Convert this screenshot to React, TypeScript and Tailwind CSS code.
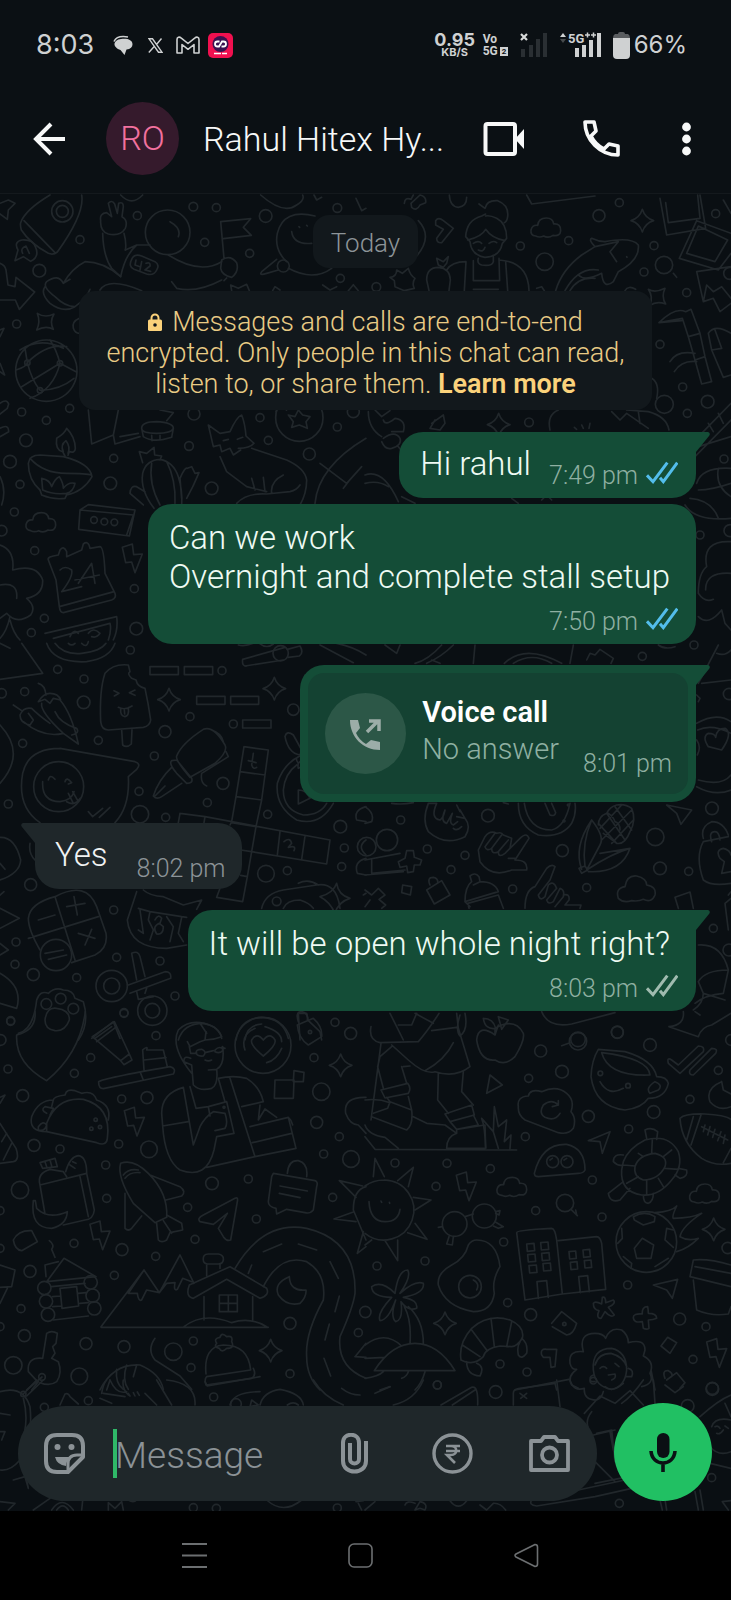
import type { ReactNode } from "react";

type Patch = {
  x: number;
  y: number;
  dots: number[][];
  sparkles?: number[][];
  bolts?: number[][];
  clouds?: number[][];
  paths: string[];
};

const SPARKLE = "M0-34Q8-8 34 0Q8 8 0 34Q-8 8-34 0Q-8-8 0-34Z";
const BOLT = "M-30-34L0-44L4-12L30-14L8 42L-2 10L-20 12Z";
const CLOUD = "M-30 26Q-46 24-44 8Q-40-8-24-6Q-22-28 2-28Q22-28 24-10Q46-12 45 10Q44 28 22 24Q8 34-6 26Q-18 32-30 26Z";

// Doodles are drawn on a grid three times as fine as the page.
const PATCHES: Patch[] = [
  {
    x: 0,
    y: 190,
    dots: [
      [580, 50, 13], [649, 53, 12], [412, 77, 12], [797, 78, 19], [614, 157, 12], [749, 190, 12], [240, 149, 12],
      [118, 242, 19], [50, 402, 12], [65, 666, 12], [209, 655, 12], [139, 691, 12], [78, 751, 19], [30, 815, 19],
      [341, 805, 12], [331, 880, 19], [60, 883, 12], [582, 672, 18], [780, 683, 12], [805, 751, 12], [567, 768, 13],
      [635, 895, 19], [928, 792, 18], [1012, 711, 12], [1060, 665, 18], [43, 966, 12], [104, 1082, 12], [403, 1196, 12],
      [133, 1285, 12], [94, 1328, 12], [409, 1316, 19], [1021, 265, 12], [1012, 54, 13], [5, 1022, 16], [187, 64, 32],
      [187, 64, 18], [503, 127, 67], [850, 228, 18], [898, 683, 71], [82, 518, 8], [180, 520, 8], [120, 601, 8],
      [282, 990, 10], [313, 995, 10], [343, 997, 10],
    ],
    bolts: [[397, 1106]],
    clouds: [[122, 996]],
    paths: [
      "M62 98Q75 60 150 15M245 15Q255 70 172 186Q160 196 145 190Q90 160 64 120Q60 105 62 98M72 92L165 188",
      "M66 150Q40 155 54 180L45 212L70 200L92 214Q120 200 106 170Q100 148 66 150M68 190Q60 175 78 168L88 190",
      "M0 40L25 30L45 40L25 60L22 88L0 72M0 220Q15 225 18 240L24 285L45 290L48 262L104 306L58 358L46 330L0 330",
      "M302 92Q298 70 320 68L335 80L325 40Q335 28 344 42L352 70L356 40Q370 34 370 50L366 80Q385 90 376 115Q360 140 325 132Q300 125 302 92M308 130Q310 200 335 235L362 260M372 130Q380 160 376 180",
      "M190 280Q215 235 255 215Q310 215 362 260Q375 195 410 165L450 165M376 180L410 165M300 300Q325 260 425 302M135 290Q120 310 150 340Q190 370 225 350Q260 325 270 298M190 280Q175 250 140 275Q125 290 165 320Q195 350 225 350M190 280L210 268",
      "M505 195Q600 255 665 215M515 275L530 295Q590 310 665 270M395 208Q402 190 425 198L465 215Q480 225 470 240Q462 258 440 252L402 238Q384 230 395 208M408 210L405 225L420 230M425 215L420 240M438 220Q452 215 450 228L435 240L452 244",
      "M662 95L752 86L730 112L754 136L670 146M662 95L672 205M665 210Q690 192 710 218Q718 245 695 262Q665 255 662 235ZM680 264L672 272M510 95Q545 115 535 140",
      "M945 78Q850 55 832 130Q822 180 860 215M830 208L785 245Q775 258 800 250L835 240M865 235Q940 275 995 235M875 125Q880 165 935 160M897 110L899 112M920 106L922 108",
      "M782 15Q850 75 890 45Q915 30 908 15M362 15Q395 50 428 15M942 15L950 30L965 22M1068 25L1085 62L1098 55M695 302L692 285L715 295L740 283L748 302M818 302L825 290L840 300M968 285L990 300L1010 290M1045 302L1060 284L1075 302",
      "M112 370Q135 385 162 372Q148 395 160 418Q138 405 110 420Q122 395 112 370M238 385Q215 395 220 415Q225 430 238 430",
      "M0 420L12 415L0 440M0 520L14 555L0 545M0 640Q20 625 26 642L22 655L0 672M0 715Q26 700 26 725L0 740",
      "M138 450A92 92 0 1 0 140 450M60 480Q120 440 190 475M48 540Q80 530 82 518Q140 460 200 470M82 518Q95 570 120 601Q180 600 222 565M180 520Q140 545 65 590M180 520L228 545M180 520Q170 480 150 450M90 625Q160 600 180 520M82 518L75 475",
      "M85 820Q88 795 120 795L190 800Q270 820 276 860Q250 905 200 915L195 925Q160 930 125 915L120 900Q85 870 85 820M90 805Q130 850 200 850Q260 850 274 855M195 798L188 785Q165 780 170 745Q195 730 200 715Q225 740 226 775Q225 790 208 785L204 796M190 785Q180 765 198 752Q212 770 204 790M125 865Q150 870 155 890Q165 865 178 860Q190 880 190 895Q205 875 225 880Q220 905 200 910M125 865L128 900Q160 915 200 910",
      "M265 660L275 762L340 735L355 660M340 735L345 762L420 740M425 715Q425 695 470 695Q520 698 520 715Q515 730 470 730Q425 730 425 715L430 740Q460 760 515 742L520 715M415 730L360 740M480 660L520 668L500 692M455 736L456 752M480 736L480 750",
      "M430 945L390 910Q392 885 410 890L435 905M462 955Q420 900 428 850Q438 810 480 808Q520 815 535 860Q548 900 545 945M455 820Q445 880 480 945M500 815Q528 870 525 940M428 818L418 785L440 790L462 772L464 795L485 798L480 810M545 925L540 865Q555 830 562 835L575 830L585 850L597 848Q580 890 560 925",
      "M640 770L625 705L660 730L690 725Q710 680 725 675Q735 700 738 738L762 760Q750 775 715 775M640 770L660 765L665 785L690 775L700 795L722 780M660 800L680 845L740 890L800 905M755 775L860 810Q915 835 920 870Q920 910 900 945M710 940Q740 908 800 912L870 905Q890 900 900 885M755 865L765 900M790 862L795 905M850 855Q810 875 815 910M670 752L685 748M712 748L728 742",
      "M828 665Q835 640 860 660M865 675L885 680L895 660L908 675L930 680L918 695L922 715L898 705L875 712L880 695ZM945 940Q955 830 1098 745M960 820L1040 880L1085 830M1030 895L1045 875",
      "M240 960L265 944L405 960L388 1038L236 1018ZM240 960L400 975M380 1035L400 975M0 860Q20 900 5 945M0 1065Q45 1080 38 1140Q110 1120 128 1170Q130 1215 80 1225Q110 1250 92 1275Q50 1305 20 1270L0 1285M0 1185Q55 1175 50 1225",
      "M145 1110Q140 1100 175 1095L180 1080Q190 1065 200 1085L200 1100L245 1080L250 1062Q265 1050 270 1075L300 1070Q312 1072 315 1150L345 1210Q350 1225 335 1230L190 1268Q180 1268 178 1250L168 1170ZM178 1250L342 1205M180 1140Q195 1125 215 1140Q220 1160 185 1205L245 1190M235 1180L275 1120L285 1180M225 1170L298 1155",
      "M135 1330L350 1280Q355 1320 340 1350M160 1345L330 1300Q335 1320 325 1350M0 1345Q20 1325 30 1280M30 1290Q40 1330 60 1350M210 1340Q220 1315 235 1330M265 1330Q280 1310 300 1330Q290 1345 275 1340",
    ],
  },
  {
    x: 365,
    y: 190,
    dots: [
      [702, 77, 18], [763, 38, 12], [1052, 71, 12], [611, 152, 12], [466, 168, 12], [867, 167, 12], [539, 215, 26],
      [837, 246, 12], [897, 225, 26], [965, 308, 12], [34, 291, 13], [885, 463, 12], [953, 591, 12], [898, 643, 27],
      [967, 670, 12], [1028, 635, 19], [492, 697, 13], [1077, 807, 12], [1005, 1035, 12], [1095, 1022, 18], [1094, 250, 18],
    ],
    sparkles: [[832, 92], [401, 704]],
    clouds: [[542, 112]],
    paths: [
      "M160 92Q205 140 155 198M118 40Q120 20 138 28L145 15M165 15Q185 20 182 38L165 45Q155 65 140 52L138 40ZM253 15Q255 50 280 52Q305 50 305 22M485 15L500 42L690 18",
      "M212 92Q220 80 235 92L265 115L230 158Q215 160 215 145L235 118L212 105ZM75 262Q95 260 95 240L112 250L130 235Q135 255 150 265Q140 280 148 295L118 302L90 290L88 272Z",
      "M342 42L360 55Q365 30 398 32Q432 45 428 80Q426 95 418 98M362 72L350 78Q305 90 302 140L315 155Q318 195 360 202Q405 200 412 160L425 145Q425 100 395 85Q375 75 362 78M308 150Q350 140 362 118Q380 145 420 152M325 160Q340 150 350 160M372 160Q385 150 395 158M340 180Q355 188 360 172",
      "M340 205Q335 220 350 225Q380 230 385 215L385 200M325 212L325 272L404 272L402 205M298 302L303 215Q260 215 245 240M402 210Q490 215 492 302M422 215L428 302M325 298L400 298M185 270Q185 232 220 232Q255 235 256 270L252 302M185 270L192 302M215 205L235 215L250 200L245 220L235 232L220 225Z",
      "M572 302Q590 240 650 195L690 170Q670 150 680 145Q700 155 720 155Q800 140 820 165Q825 210 760 245L745 275Q715 300 710 250Q660 275 640 255M690 170L760 155L735 185L755 215M600 302Q640 230 700 240M615 302Q640 260 690 265M785 200L786 202M515 295L530 290L538 302M925 250L935 262",
      "M885 25L905 135L1022 115L1005 15M902 38L910 98L1005 85L998 15M995 92L1098 130M995 92L943 205L1060 240L1098 190M1000 108L965 190L1050 215L1088 150ZM995 245L1098 230M995 245L1015 335L1045 325L1065 365L1098 340M1015 335L1025 285L1045 305L1070 290L1098 325M1075 30L1098 70",
      "M850 298Q870 310 900 295Q888 320 902 342Q875 332 855 346Q865 320 850 298M780 302Q790 285 812 298",
      "M882 398Q930 350 962 365L978 358Q990 390 1005 430L1020 500L1040 575L1010 582L990 510L970 440L952 385ZM882 398L950 392M970 440L1005 430M990 510L1020 500M915 515Q935 480 990 490M928 545Q950 510 995 515M1030 430Q1050 400 1098 430M1030 430L1040 480L1075 562L1098 555M1040 480L1070 475M1070 475L1050 420",
      "M860 565Q885 580 875 625M740 665L765 690L785 670L850 715M785 660L850 665Q905 680 912 720M555 720Q545 675 580 660M820 665L825 700M650 705L655 715M675 700L672 715M628 712L635 718",
      "M10 665Q10 715 50 740M55 745Q90 720 105 745Q112 765 80 775Q60 780 50 755M55 690Q60 710 90 685Q125 690 115 725L80 725M200 700L235 675L240 700L225 720L195 715L210 690M30 660L50 680L75 662M100 770L112 785",
      "M995 745L1098 640M990 800L1098 690M1030 700L1045 725M1060 670L1075 700M1000 770L1098 740M1098 835Q1010 830 995 880M1060 835Q1050 890 1098 920M1000 900Q1040 900 1098 880M960 945Q990 995 1098 985M975 925Q1040 930 1060 985",
      "M0 855Q55 835 100 935M0 880Q40 870 70 890M110 920Q130 930 150 940M440 925L460 940M530 930L545 915L560 930M1098 1055Q1010 1050 1025 1130Q1000 1150 1000 1210Q1020 1240 1045 1228M1098 1150Q1020 1145 1022 1200M1000 1280Q1030 1310 1070 1260L1080 1300L1098 1320",
    ],
  },
  {
    x: 0,
    y: 640,
    dots: [
      [391, 30, 12], [173, 88, 12], [252, 117, 12], [74, 155, 12], [251, 187, 19], [5, 160, 14], [570, 230, 12],
      [495, 275, 18], [68, 310, 12], [295, 301, 12], [463, 348, 12], [666, 92, 12], [880, 209, 17], [700, 252, 12],
      [669, 430, 18], [417, 454, 12], [25, 492, 12], [622, 488, 12], [420, 523, 26], [497, 532, 12], [803, 523, 12],
      [1021, 560, 19], [1033, 624, 12], [1025, 680, 12], [798, 701, 25], [862, 692, 12], [830, 784, 13], [92, 734, 18],
      [341, 810, 12], [48, 906, 12], [45, 973, 12], [100, 1004, 18], [350, 952, 12], [480, 963, 12], [230, 1013, 12],
      [525, 1068, 12], [372, 1118, 12], [32, 1142, 12], [335, 1038, 47], [335, 1038, 24], [457, 1112, 44], [457, 1112, 22],
      [176, 440, 75], [168, 945, 47], [842, 40, 23], [139, 1092, 16], [182, 1076, 16], [220, 1106, 16], [1005, 1147, 12],
      [1052, 1180, 18],
    ],
    sparkles: [[507, 179], [823, 146]],
    paths: [
      "M140 10Q160 70 260 65Q330 55 345 10M165 10Q190 45 245 40Q300 35 318 10M0 118L128 100L65 10M205 10Q215 20 225 10M245 10Q260 25 265 5M0 10L30 25",
      "M385 75L390 95Q380 100 395 115L408 120Q412 140 435 145Q445 190 452 240Q450 258 430 262L325 270Q305 270 302 245Q298 150 315 100Q340 70 385 75M365 270L368 315Q380 325 394 312L396 268M342 152L357 160L343 168M405 150L388 158L405 166M355 202Q375 212 396 198M362 206Q360 228 375 230Q388 228 385 203M373 210L374 222",
      "M450 80H535V104H450ZM553 80H638V104H553ZM590 169H675V193H590ZM692 169H776V193H692ZM728 240H813V264H728ZM728 58L855 22M735 78L850 60M728 58Q725 80 740 78M862 28L900 18Q912 38 898 48L865 52M715 15Q735 20 760 10M778 10Q800 28 820 12M960 15L1060 68M1010 10Q1060 20 1098 45",
      "M115 130Q135 135 138 165M115 185Q130 160 150 160Q175 160 182 180M115 185L135 178L150 190L160 175L182 180M125 190Q120 215 190 280L235 312Q215 220 180 180M40 195L65 212M60 225Q70 200 95 205Q115 225 150 250M60 225Q60 250 90 255L100 240L85 220M70 245Q130 295 190 280M165 215Q180 250 230 265Q240 280 215 285",
      "M530 348Q545 310 610 268Q640 255 675 315Q685 335 645 370L570 412M530 348Q525 360 570 412M515 362Q505 370 530 400L560 430Q580 430 575 415L530 360ZM515 382Q475 420 460 468Q470 480 485 470L545 430M465 468L495 438M605 400Q600 430 620 438M635 270Q665 280 670 305M678 335L685 350L605 400",
      "M180 325L405 365Q425 372 410 388L385 410Q390 500 345 548M180 325Q85 325 68 400Q50 500 120 548M128 425Q125 485 180 485Q215 480 222 455M145 420Q150 400 165 418M195 425Q200 408 215 428L205 432M205 460L220 490M218 455L235 485M200 485Q225 500 240 475M265 515L278 530L308 505M298 532L330 502",
      "M732 320L805 330L795 405L785 480L768 560L755 635L742 710L728 785L650 772L660 745M732 320L720 395L708 470L695 545L690 555M720 395L795 405M708 470L785 480M540 520L615 530L990 600L980 672L755 635L722 630M540 520L535 548M615 530L612 548M840 575L832 645M915 588L905 658M768 560L695 548M742 710L722 706M745 362L768 368M760 340L755 375Q760 390 770 382M852 605Q870 590 875 610L865 622Q890 615 882 632",
      "M905 345Q850 370 832 430Q825 500 890 540Q960 560 1000 490M890 375Q855 400 850 450Q850 510 910 525Q960 525 980 490M855 290Q860 270 880 285L905 330L900 345Q865 340 855 290M895 370Q880 350 905 348M905 380L895 385Q890 365 908 362M895 450Q920 450 930 475L895 492ZM905 150L915 105",
      "M0 592Q45 590 62 660Q60 700 0 720M0 670L15 688M90 610Q85 640 105 660M0 255Q80 340 0 430M1098 500Q1060 510 1070 540L1098 545M1098 600Q1070 620 1098 645M1098 655Q1060 665 1072 700L1098 705",
      "M165 770Q90 790 85 835Q85 870 120 930M165 770Q260 720 290 800L318 880Q325 925 285 945L215 968M165 770L225 960M85 895L295 830M200 800L255 790M222 770L232 825M115 840L165 825M235 880L285 895M275 868L255 915M135 940L190 930M145 958L200 945M0 765L12 755M0 805L58 835L0 865M0 910L25 930L0 945",
      "M410 755L382 840Q390 925 500 925L560 915M430 750Q450 768 490 770L550 795L605 780L590 808M415 805L450 815L545 830L560 832M420 810L430 880L415 870M450 815L445 840L460 870L450 900M500 830L520 860L510 905M545 832L535 880L550 905M465 840Q475 820 485 835L480 850M478 850Q455 860 470 882Q490 885 490 860L478 850",
      "M395 940Q415 930 420 950L435 1010M395 940L410 1020M385 1035L495 995Q515 995 512 1015L390 1060M410 1055L415 1078L460 1070M435 1060L440 1045M0 1000Q70 1040 50 1105L0 1090M55 1180Q100 1170 110 1080Q120 1050 145 1060Q165 1040 190 1050Q220 1050 225 1075L250 1085Q270 1150 235 1200M135 1140Q140 1100 170 1105Q210 1110 208 1140Q195 1175 165 1172Q135 1168 135 1140",
      "M785 805Q795 760 850 750L950 735Q1010 725 1020 805M850 805Q860 780 900 780Q930 790 940 805M895 730Q925 715 955 735M1010 730Q1015 765 1050 775Q1015 785 1005 820Q990 785 960 770Q1000 760 1010 730M275 1195L340 1145L360 1195M285 1195L335 1160M535 1200Q550 1150 610 1150Q660 1160 665 1195M600 1150L620 1180M708 1200Q720 1135 785 1132Q850 1135 865 1195M735 1200Q740 1155 785 1152M895 1120L920 1120L925 1142L960 1175L965 1200M895 1120L900 1200M1090 765L1098 760",
    ],
  },
  {
    x: 365,
    y: 640,
    dots: [
      [832, 49, 12], [987, 15, 12], [369, 527, 19], [107, 540, 12], [187, 627, 12], [300, 646, 12], [258, 689, 12],
      [592, 632, 18], [871, 591, 26], [1041, 505, 19], [885, 685, 19], [971, 694, 12], [665, 743, 12], [443, 747, 12],
      [66, 600, 32], [5, 620, 28], [1045, 865, 12], [1092, 162, 17], [610, 495, 3], [597, 543, 3],
      [757, 1176, 18], [639, 1198, 22], [1092, 930, 18],
    ],
    paths: [
      "M418 70Q480 10 590 70M445 70Q500 35 560 70M60 15L95 40L105 15M150 70Q190 60 230 15M185 70Q230 50 265 15M200 60L225 70M330 15L325 70M625 15L615 70M665 60L675 40L690 45L705 28L745 55L738 70M880 15Q900 30 930 20M1010 130L1098 120M1000 130L1060 15M1055 40Q1080 50 1098 30",
      "M995 250Q1055 215 1098 245M995 440Q1050 470 1098 450M1000 420Q1070 440 1098 405M998 270Q1040 250 1098 280M1030 320Q1010 290 1030 280Q1050 280 1052 292Q1055 265 1080 265Q1105 280 1070 330ZM995 165L1005 175L1000 185M995 300Q1010 320 997 345",
      "M190 490Q170 540 190 575Q240 620 300 590Q320 560 300 535L275 530M190 490L215 490M215 490Q195 535 225 540Q235 535 240 510Q225 545 245 550L262 520Q250 550 265 555L278 545M285 515L275 495M290 560Q275 575 265 565M300 535L285 510",
      "M460 490Q460 560 520 585Q590 595 620 550Q635 520 630 490M478 490Q490 570 560 570Q600 560 615 490M540 490L555 525Q570 530 572 518L560 490M415 488L430 492M80 490Q110 495 145 488M0 500Q30 520 20 545L0 550",
      "M340 630L360 590Q375 570 395 580Q410 575 415 585L440 595L435 625L465 595Q485 575 492 595L450 660Q490 660 485 690L440 690Q380 715 345 665ZM390 580L360 620Q365 635 380 625L410 585M380 625Q380 645 400 635L430 600M400 635Q400 655 420 640L435 625M450 655L430 655",
      "M650 688Q625 620 680 540Q720 590 705 615L665 690M680 540Q650 610 660 680M705 640L795 625Q770 700 670 695M795 625Q740 640 665 690M642 685L650 700L668 690L660 678ZM700 555Q700 530 725 520Q735 500 755 495Q780 490 800 505Q815 540 795 575Q780 615 755 610L715 580M725 520L780 600M750 500L800 570M700 550L755 610M710 600L800 510M705 565L770 495M740 610L805 540M730 520Q745 530 750 545Q765 550 765 570",
      "M905 495L980 510L948 553L935 520ZM1015 595Q1005 560 1040 545Q1075 545 1090 585M1040 605Q1030 575 1050 575Q1062 575 1065 600M1015 605L1090 590M1015 605Q990 650 1015 720Q1040 740 1098 730M1065 655Q1050 630 1075 625Q1095 630 1098 645M1065 655L1078 665L1070 700L1098 695",
      "M100 665L120 655L125 632L145 632L148 652L170 660L165 675L148 675L145 695L128 698L125 678L105 682ZM0 660L105 640M20 660L20 700L120 690M0 705L115 695M0 750L20 765L40 745L60 765L42 778L62 795L50 805M0 800L15 780M113 735L140 740L136 765L110 758ZM185 750L230 722L255 765L208 792ZM195 735Q185 712 205 712Q220 715 218 728",
      "M315 708Q330 695 342 710L345 725Q390 725 400 755L300 785Q300 740 320 725ZM300 785L315 800M312 805L308 790L400 765L415 805M325 735L345 725M480 805Q480 750 510 740L545 685Q560 670 570 680L555 720L520 765Q525 785 540 770L550 735Q565 720 575 745L545 780Q550 795 565 785L585 745Q600 750 595 770L570 800M595 765Q615 760 612 780L600 795L648 795L645 805",
      "M760 775Q750 745 780 740Q785 705 815 708Q845 715 845 735Q875 740 870 765Q860 790 835 778Q820 785 800 782Q775 790 760 775M930 772L975 756L985 805M930 772L940 805M1080 790L1098 775M1080 790L1090 870M1090 765L1098 755M1000 915Q1070 910 1090 990Q1020 990 1000 1025M1090 990L1075 1060Q1020 1065 990 1090M1015 1060Q1015 1090 985 1110M1000 1025L1015 1060L1080 1080",
    ],
  },
  {
    x: 0,
    y: 1010,
    dots: [
      [32, 34, 12], [372, 10, 12], [468, 77, 12], [272, 143, 12], [24, 177, 12], [223, 190, 12], [68, 257, 18],
      [365, 267, 12], [441, 263, 18], [102, 406, 18], [180, 417, 12], [356, 402, 12], [447, 418, 25], [317, 465, 12],
      [320, 565, 12], [60, 540, 26], [563, 592, 12], [636, 520, 19], [745, 507, 12], [585, 688, 12], [769, 627, 12],
      [366, 719, 18], [222, 700, 12], [467, 739, 12], [343, 796, 12], [90, 784, 18], [63, 896, 12], [73, 977, 18],
      [40, 1066, 26], [258, 1001, 18], [238, 1099, 25], [372, 1010, 18], [520, 1025, 26], [580, 993, 12], [573, 1073, 12],
      [870, 940, 18], [870, 1091, 12], [964, 245, 26], [950, 337, 18], [1018, 380, 12], [1053, 447, 25], [971, 432, 12],
      [998, 562, 12], [942, 143, 12], [789, 106, 84], [133, 834, 20], [138, 874, 20], [144, 914, 20], [272, 817, 20],
      [278, 857, 20], [283, 895, 20], [126, 1101, 10], [287, 329, 5], [274, 356, 5], [300, 351, 5], [672, 292, 3],
      [930, 66, 5], [1075, 968, 12], [2, 90, 16], [0, 602, 12], [0, 715, 12], [0, 950, 12],
    ],
    sparkles: [[1022, 166], [812, 1022]],
    bolts: [[403, 336], [300, 677]],
    paths: [
      "M105 5Q110 60 50 75Q45 160 140 212Q240 130 256 5M277 80L343 35L350 50L290 95M277 80L362 152L388 132L350 50M362 152L372 164L396 150L388 132M296 215Q310 205 510 170Q530 175 520 192L310 236Q295 235 296 215M422 190L430 210M432 180L428 120Q445 105 440 120L490 120L502 170M432 150L498 143",
      "M575 190Q510 110 535 60Q575 20 640 50Q655 60 665 80Q640 90 615 90L600 95L570 110L562 95M615 90L618 65M568 110L572 130L590 130M668 110Q675 165 650 178L625 180M572 145Q550 135 552 155L575 165L580 225Q600 245 635 235Q655 225 650 178M590 130Q585 118 605 118Q622 125 610 138Q590 140 588 128M645 120Q660 105 670 120Q660 132 645 125ZM615 128L640 122M675 115L665 112M615 150Q625 155 635 150",
      "M550 232Q485 250 485 310L488 348Q495 450 540 480Q620 510 642 420L650 380L702 370L680 275L625 290L630 318M550 232L580 405L600 350Q615 320 640 305L675 310Q685 340 675 355L645 362M488 348L565 335M570 230L588 295L625 290M655 205L675 275M655 205Q700 195 740 205Q780 230 790 275L725 290M690 205L765 440L620 472M750 350L865 322L888 415L765 440M757 398L875 370M775 330L780 285M775 330L795 297L830 322M865 322Q875 330 878 345",
      "M735 120Q720 75 765 55M795 50Q845 65 845 95M845 115Q830 150 800 158M790 138Q750 105 755 90Q770 65 790 90Q810 65 825 90Q830 105 790 138M892 45L940 25Q968 50 965 80L925 105Q895 85 892 45M895 35Q885 5 905 5Q925 10 922 28M882 182L912 187L910 215L880 215ZM825 210L882 210L880 265L823 265Z",
      "M140 365Q85 365 95 320Q115 270 160 270Q160 260 195 255Q200 235 225 242L245 250Q280 240 290 270Q335 285 325 330M140 365L290 398Q320 410 322 385Q335 290 250 268Q170 260 140 340ZM160 270L155 290M115 350Q130 330 140 345Q135 365 115 360ZM140 310Q120 300 135 290L160 295L150 315",
      "M120 525L260 490L283 600Q280 628 255 630L190 645M120 525L135 612M120 525Q110 490 150 478L190 485L200 500M120 458L165 445L172 470L128 475ZM135 455L140 470M150 450L155 468M197 485Q210 440 235 437Q260 440 260 490M240 500L265 620M100 572Q90 655 155 655Q200 645 202 605Q145 630 110 595L106 572ZM210 465L225 475M218 455L228 460",
      "M362 460Q350 500 400 580L465 638L500 622Q505 550 445 490Q400 445 362 460M370 495Q385 475 415 480M375 505Q390 485 420 488M450 495L540 530Q560 545 545 558L498 570M375 550L375 655Q385 665 395 655L425 618M470 640L475 690Q485 700 500 690L510 668L548 660L545 640L500 615M490 632L515 670",
      "M705 565Q715 560 712 575L692 690Q680 695 670 680L655 655L682 610L640 643L600 635Q590 625 610 615ZM820 490L945 512Q955 515 950 530L940 600Q930 612 915 608L860 598L830 612L828 595Q805 590 805 575L815 500ZM862 490Q865 450 895 452Q925 460 920 500M840 528L922 543M838 550L900 563M1060 600Q1060 540 1098 530M1060 600L1098 690M1018 512L1088 528M1018 512L1068 562M1002 627L1062 605M1002 627L1068 635M1090 665L1072 730L1098 710",
      "M40 690Q55 660 95 662L112 695L65 722Q45 720 40 690M148 692Q165 705 155 718L165 742M135 765L175 755M135 765L138 800M192 745L288 800L140 815ZM155 830L255 820M158 860L180 858M158 890L185 888M235 850L258 848M240 880L265 878M160 930L265 918M180 835L230 830L236 888L186 895ZM0 765L45 780L35 830L0 832M0 880L22 835",
      "M303 950L432 780L478 848L540 735L582 820M432 780L385 850L412 850Q415 875 425 870L440 840L478 848M478 848L500 820L525 818Q520 845 532 838L548 805L575 815M303 952H805M568 825Q555 860 580 865L680 808L780 865Q810 855 800 835L690 770ZM612 860V930M758 860V930M658 855H712V905H658ZM685 855V905M658 880H712M620 798V762M660 775V762M610 750Q608 732 625 732H655Q672 735 670 750Q668 762 655 762H622Q610 760 610 750M552 950Q610 905 695 938Q750 920 800 950",
      "M705 775Q790 630 920 655Q1070 690 1065 850Q1060 890 1020 980Q1010 1070 1098 1105M790 830Q840 730 920 755Q980 790 970 870Q915 970 920 1040Q920 1100 960 1140M790 725L845 702M895 702L950 720M990 755L1015 805M1018 858L1005 905M988 942L975 990M972 1045L992 1098M755 765L745 790M868 800Q820 820 835 855Q860 890 900 880Q920 860 918 840Q870 845 868 800",
      "M140 970Q155 960 172 970L168 1000L158 1010L165 1030L155 1045M140 970L128 1045M155 1045L175 1055Q188 1090 170 1115Q150 1130 120 1118M128 1045Q80 1040 85 1085L110 1112M80 1140L126 1101M95 1140L115 1115M465 985Q440 1020 465 1050L540 1098L575 1138M300 1140Q340 1060 420 1065Q480 1090 490 1138M320 1140L330 1110M350 1078Q345 1120 370 1138M380 1065Q365 1110 385 1138M410 1065L400 1100",
      "M618 1092Q610 1010 670 1005Q745 1005 752 1080L620 1100Q612 1108 618 1125L755 1105Q770 1095 760 1075M650 1000Q640 985 660 982Q665 965 680 980Q700 975 695 995Q705 1015 680 1015Q665 1030 658 1015Q640 1010 650 1000M1065 1040L1098 1000M1065 1040L1098 1042M1098 262Q1030 260 1037 310Q1050 345 1075 345L1098 370M0 262L15 255L0 280M0 340L48 415Q60 450 40 455L0 460M5 395L20 370M10 450L35 400",
    ],
  },
  {
    x: 365,
    y: 1010,
    dots: [
      [757, 67, 18], [527, 123, 18], [591, 185, 19], [639, 94, 26], [855, 105, 19], [491, 205, 12], [670, 319, 18],
      [866, 306, 19], [791, 357, 12], [975, 268, 12], [1060, 181, 12], [481, 380, 12], [90, 459, 12], [246, 460, 12],
      [376, 476, 12], [213, 529, 12], [682, 510, 12], [512, 602, 12], [711, 621, 12], [600, 579, 26], [180, 753, 12],
      [36, 768, 12], [416, 696, 12], [428, 878, 12], [497, 914, 18], [405, 1062, 12], [486, 1086, 12], [217, 1125, 12],
      [788, 825, 12], [944, 927, 18], [1023, 950, 12], [984, 1048, 12], [1088, 714, 17], [269, 642, 37], [358, 618, 36],
      [315, 830, 34], [563, 455, 18], [606, 455, 18], [844, 696, 91], [706, 190, 7], [789, 227, 7], [598, 942, 5],
      [1, 906, 17], [1042, 1135, 18], [1098, 90, 16],
    ],
    sparkles: [[240, 940], [1046, 658]],
    bolts: [[304, 530], [1055, 1030]],
    clouds: [[440, 530], [1018, 550]],
    paths: [
      "M18 50Q10 90 45 98L160 95Q190 60 222 10M75 10L115 90M100 45L140 45L155 10M150 10L205 40M200 62L275 52M275 10L280 55L315 170Q270 205 210 185Q180 195 130 150L80 105M265 98Q240 150 180 182M300 10Q310 60 285 78Q270 60 285 15M48 100L18 330M80 110L45 140L38 170L55 235M110 170L125 220M115 170L135 168M220 190L218 270L250 310M295 185L290 245L325 285",
      "M48 240L128 220Q140 235 130 250L60 264ZM65 262L75 275L68 295L25 310M75 275L140 300Q145 345 125 360L20 320M130 260L140 300M240 312L320 285L328 315L255 335ZM255 335L275 358L340 345L325 315M275 358L360 345L362 415L245 415Q245 380 275 370ZM145 320L185 340L240 345L275 370M0 345Q10 375 60 382L100 415M0 380L30 418L455 420M0 270Q40 265 75 278",
      "M362 415Q360 350 350 325L385 365L388 290L400 350L425 330L418 395L438 375L435 415M385 365L400 415M390 75Q340 40 335 90Q345 155 390 150Q420 170 450 140Q480 90 475 70Q455 30 410 45L390 55ZM390 75L400 45M355 25Q385 25 392 55Q360 60 355 25M400 20L430 30L410 58ZM375 195L412 225L365 250ZM590 107L615 98",
      "M530 5Q550 55 620 42L750 8M912 50Q960 45 955 5M912 50L1000 80Q1010 50 1040 45L1098 10M990 5L1005 15M700 118Q680 150 678 200Q690 290 780 300Q830 295 850 265Q900 265 910 220Q905 200 875 200Q865 150 780 125ZM710 128Q850 145 855 195Q730 200 710 128M855 250Q840 235 870 215Q895 225 880 240ZM705 215Q730 260 775 235M910 160Q905 140 920 150L940 165L1000 108Q1020 108 1015 125L945 190ZM975 180L1040 115Q1060 115 1052 130L985 195Q970 195 975 180",
      "M460 290Q455 260 490 258Q495 235 530 245Q575 225 605 250Q630 270 618 305Q635 325 625 355Q610 375 580 368L480 330Q458 315 460 290M580 285Q560 265 535 285Q520 310 540 322Q570 335 585 310M580 285L562 290M580 285L580 272M1070 215Q1020 235 1035 275Q1060 305 1098 290M1070 215L1075 240L1098 252M670 392L735 365L712 430L705 395ZM632 600L635 615M618 598L637 617",
      "M945 325Q960 310 1020 312Q1080 315 1098 328M945 325Q950 400 1010 445Q1050 470 1098 460M985 320L965 390M1008 315L978 405M1010 350L1088 390M1020 345L1015 365M1035 350L1028 375M1050 358L1043 382M1068 365L1058 392M1080 375L1075 400M1075 458L1098 415",
      "M508 490Q530 400 605 403Q660 415 660 480Q655 490 640 490L520 500Q508 500 508 490M555 450L562 445M597 450L605 445M775 455Q790 415 840 390Q910 370 940 425Q955 470 920 510Q880 560 830 555Q765 545 770 480ZM810 470Q820 435 870 430Q910 440 900 470Q880 510 835 510Q805 500 810 470M845 385L840 360Q860 350 878 365L875 388M775 435Q745 430 745 455Q760 470 775 465M795 535L765 570Q735 580 730 550L775 515M835 555Q835 580 850 580Q865 575 865 550M940 475L965 480Q970 500 945 505L930 495M775 465L810 468M820 430L835 440M862 388L860 430M920 420L895 440M940 478L900 475M880 505L895 530M845 512L845 553M785 520L820 500",
      "M58 510A90 90 0 1 1 0 670M0 528Q25 510 58 510M25 500L30 445L58 500M98 512L145 472L130 530M145 562L198 570L150 600M150 640L186 688L128 668M60 692L98 752L98 690M0 705L20 690M12 575Q15 635 60 635Q100 635 105 598M48 573L50 577M73 577L74 580M300 620L325 612M232 650L220 652M265 680L262 705L245 702L252 680M392 605L405 602L402 615L392 610M390 635L415 650L400 655L385 648",
      "M335 690Q395 690 405 770Q380 810 388 850Q380 905 325 905Q240 890 220 825Q215 790 260 765Q300 745 310 705Q320 690 335 690M325 810Q345 820 335 840M455 668Q455 660 560 655Q570 655 575 690L592 852L480 870ZM580 692L695 680Q705 680 710 700L722 838L592 852M485 702L507 700L509 722L487 724ZM527 698L549 696L551 718L529 720ZM488 734L510 732L512 754L490 756ZM530 730L552 728L554 750L532 752ZM492 767L514 765L516 787L494 789ZM534 761L556 759L558 781L536 783ZM520 865L516 815L545 812L550 862M612 725L632 723L634 745L614 747ZM654 720L674 718L676 740L656 742ZM616 757L636 755L638 777L618 779ZM658 752L678 750L680 772L660 774ZM646 848L641 800L668 797L673 845",
      "M808 715L832 685L866 705L858 745L815 745ZM805 620Q840 600 870 620L868 635L835 645L808 630ZM905 655L900 690L925 712M905 655L925 660M770 655L772 685L758 700M775 740L800 760L798 775M870 770L910 745M870 608Q920 605 935 588Q920 620 925 625Q980 625 1010 610Q950 650 945 680Q970 695 1000 685Q970 715 935 725M865 825L938 808L922 865L905 840ZM985 750Q1030 745 1098 765M985 750L975 800L1098 830M985 810L995 900Q1040 920 1090 912L1098 890M990 770L1098 790",
      "M20 830Q50 810 90 850Q100 780 128 780Q140 800 105 850Q150 810 175 820Q180 850 115 862Q160 870 155 895Q130 905 108 875Q115 930 92 935Q75 920 92 870Q70 930 45 932Q35 910 80 862Q20 860 20 830M118 890Q140 930 135 1000M130 890Q175 930 175 1000M28 1082Q80 1000 150 1000Q220 1000 270 1082ZM0 1005Q60 960 110 1008M0 1045L60 1042M0 1105Q40 1100 55 1085M180 1085Q170 1120 150 1140M130 1085Q125 1100 110 1105M45 1140L75 1130",
      "M288 1050Q280 1000 320 955Q370 910 435 930Q480 950 472 985Q455 1010 440 1010L405 1008Q360 1015 355 1040Q330 1065 300 1055ZM320 960L365 1020M378 925L388 1010M440 935L425 1010M292 1005L345 1040M470 985Q490 1000 485 1030Q470 1050 460 1035Q455 1010 465 995M305 1055Q305 1095 345 1098Q360 1070 335 1060M530 1035Q525 1015 545 1018L575 1018L570 1070L558 1072L555 1042L535 1042ZM450 1140L612 1108M570 1120L575 1140M560 940L590 905L635 940Q625 975 605 975L562 950M805 922Q805 910 832 912Q830 890 848 890Q850 900 850 910Q875 910 875 925Q865 930 850 930L852 955Q845 960 835 955L832 935Q805 940 805 922M888 1008L908 982L935 998L915 1030Z",
      "M685 880Q690 872 710 882L712 862Q722 858 722 878L745 870Q755 880 730 892L748 915Q738 925 720 905L708 925Q692 925 702 902Q685 900 685 880M655 1025Q640 970 690 970Q715 970 722 985Q735 950 770 960Q790 975 790 998Q840 985 840 1020L835 1038Q870 1055 855 1090Q870 1120 830 1130M655 1025Q610 1020 615 1060Q620 1080 635 1078Q605 1100 620 1125L640 1135M685 1080Q680 1015 740 1015Q785 1025 785 1080Q780 1130 740 1138Q690 1130 685 1080M690 1065Q700 1030 738 1030Q775 1040 785 1070M685 1095Q670 1100 678 1115L690 1115M790 1075Q808 1080 800 1100L785 1100M705 1075Q715 1065 725 1075M750 1060L762 1070M730 1095L750 1092Q755 1105 740 1110M858 1080L870 1140M900 1105Q890 1080 910 1082Q925 1090 920 1100M905 1110L935 1088L960 1118L945 1135",
    ],
  },
  {
    x: 0,
    y: 1380,
    dots: [[265, 62, 12], [133, 82, 12], [641, 51, 12], [580, 383, 12], [649, 385, 12], [1012, 384, 12], [708, 72, 16], [70, 42, 8]],
    paths: [
      "M0 35Q70 15 90 80Q100 180 60 240Q30 275 0 270M70 42L110 0M80 48L130 0M70 55Q90 130 60 200M0 100L30 105M0 155L15 155L5 180M180 75L195 42Q205 38 210 50L235 72M40 300L75 290M75 290L85 325L80 300M305 40Q310 10 320 0M300 55L335 70M310 40L375 50M330 0Q350 45 380 35M370 0Q365 25 385 45M470 0L515 75M500 0Q590 10 585 75M435 40L470 75M385 40L390 48M400 38L405 48M412 36L418 46",
      "M615 5L622 18L780 -10M690 75Q700 35 780 35M755 60L775 75L750 80ZM780 75Q790 35 840 28Q905 40 910 75M862 75Q880 62 895 75M940 0Q970 50 1030 75M1025 25Q1050 45 1080 45M0 365L45 370L25 390M100 390L150 355M245 390L248 362M155 390Q185 345 220 390M170 390Q188 365 205 390M325 390L325 368L345 385L365 365L370 390M385 360Q400 370 410 360M800 360Q850 405 905 360M1068 365L1090 362M1075 370L1085 390",
    ],
  },
  {
    x: 365,
    y: 1380,
    dots: [[217, 15, 12], [392, 36, 19], [1042, 27, 19], [968, 78, 19], [1040, 293, 12], [763, 370, 12], [685, 2, 10]],
    paths: [
      "M30 40L75 20M85 75Q150 60 175 0M228 75L320 22Q340 15 338 75M262 75L330 30M445 75L445 40Q445 28 460 26L570 10M465 40L485 55M485 40L467 55M575 0L585 80M615 0Q625 35 658 25Q655 60 695 60Q710 55 715 35M658 100L705 48L750 70L795 32L835 75M770 70Q800 50 835 0M865 0L870 70M720 20Q740 40 775 10M900 15L930 38L955 20M1005 110Q1060 60 1098 45M680 95Q660 120 670 145M695 160L740 150L750 245M690 245L750 305M735 155L745 210L755 240M685 165L750 150M1098 120Q1050 110 1040 140M1098 215Q1060 230 1035 200M1050 140Q1060 135 1065 145M1080 138L1090 145M1055 160Q1065 165 1075 150M1035 250L1098 265M1080 70L1098 110",
      "M640 330L780 300M690 310L790 290M500 360Q490 375 515 378L690 350L800 325M885 360L892 390M900 358L905 390M990 335L1000 390M1005 330L1015 390M0 390L30 365M120 375Q125 360 150 370M165 365Q190 370 180 390L165 385L150 390ZM255 362Q280 395 305 362M345 375L365 390L385 370Q405 368 422 390M1072 365L1098 362M1072 365L1090 390",
    ],
  },
];

function Wallpaper() {
  return (
    <svg
      aria-hidden="true"
      className="absolute inset-0 h-full w-full"
      viewBox="0 194 731 1317"
      preserveAspectRatio="xMidYMin slice"
      fill="none"
      stroke="#21272b"
      strokeWidth="5"
      strokeLinecap="round"
      strokeLinejoin="round"
    >
      {PATCHES.map((p) => (
        <g key={`${p.x}-${p.y}`} transform={`translate(${p.x} ${p.y}) scale(.33333)`}>
          {p.dots.map(([cx, cy, r], i) => (
            <circle key={i} cx={cx} cy={cy} r={r} />
          ))}
          {p.sparkles?.map(([x, y], i) => (
            <path key={i} d={SPARKLE} transform={`translate(${x} ${y})`} />
          ))}
          {p.bolts?.map(([x, y], i) => (
            <path key={i} d={BOLT} transform={`translate(${x} ${y})`} />
          ))}
          {p.clouds?.map(([x, y], i) => (
            <path key={i} d={CLOUD} transform={`translate(${x} ${y})`} />
          ))}
          {p.paths.map((d, i) => (
            <path key={i} d={d} />
          ))}
        </g>
      ))}
    </svg>
  );
}

function StatusBar() {
  return (
    <div className="flex h-[90px] items-center justify-between pl-9 pr-11 text-[#cfd1d2]">
      <div className="flex items-center">
        <span className="w-[77px] font-[Inter] text-[27px] leading-8">8:03</span>
        <svg className="h-5 w-5" viewBox="0 0 20 20" fill="currentColor" aria-label="Messages">
          <path d="M1 6.500C3 2 8 .8 15 2" fill="none" stroke="currentColor" strokeWidth="1.500" />
          <path d="M1.500 8.500C3 4.500 7 3.800 11 3.800c5 0 8.500 2 8.500 5.400 0 3-2 4.800-6 5.400L11.500 20 7.500 15C4 14 1 11 1.500 8.500Z" />
        </svg>
        <svg className="ml-[15px] h-[15px] w-[15px]" viewBox="0 0 15 15" fill="none" stroke="currentColor" strokeWidth="1.400" aria-label="X">
          <path d="M1 .8h3.500L14 14.200h-3.500ZM13.500.5 8.500 6.500M6.200 8.500.8 14.500" />
        </svg>
        <svg className="ml-[13px] h-[18px] w-6" viewBox="0 0 24 18" fill="none" stroke="currentColor" strokeWidth="1.600" strokeLinejoin="round" aria-label="Gmail">
          <path d="M1 3.500C1 1 3.500.5 5 1.800l7 5.700 7-5.700C20.500.5 23 1 23 3.500V17h-5V8.500L12 13.300 6 8.500V17H1Z" />
        </svg>
        <svg className="ml-2 h-[25px] w-[25px]" viewBox="0 0 25 25" aria-label="App">
          <rect width="25" height="25" rx="5" fill="#f0104f" />
          <circle cx="12.500" cy="11" r="8" fill="#3a1150" />
          <path d="M11.500 8.500H9.500a2.500 2.500 0 0 0 0 5h1.500l3-5h1.500a2.500 2.500 0 0 1 0 5h-2" fill="none" stroke="#fff" strokeWidth="1.800" />
          <path d="M6 20.500h7M14 20.500h5" stroke="#fff" strokeWidth="1.600" />
        </svg>
      </div>
      <div className="flex items-center">
        <div className="flex w-10 flex-col items-center font-[Inter] font-bold">
          <span className="text-[18px] leading-[15px]">0.95</span>
          <span className="text-[11px] leading-[11px]">KB/S</span>
        </div>
        <div className="ml-2 flex w-6 flex-col font-[Roboto] text-[12px] font-bold leading-3">
          <span>Vo</span>
          <span className="flex items-center gap-0.5">
            5G
            <span className="bg-[#cfd1d2] px-0.5 text-[8px] leading-[9px] text-[#0b1014]">2</span>
          </span>
        </div>
        <svg className="ml-3 h-[26px] w-7" viewBox="0 0 28 26" aria-label="No signal">
          <path d="M2 2l6 6M8 2L2 8" stroke="#d8dada" strokeWidth="2.200" />
          <path d="M2 17h4v8H2ZM10 13h4v12h-4ZM17 7h4v18h-4ZM24 1h4v24h-4Z" fill="#2a2f33" />
        </svg>
        <svg className="ml-3 h-[26px] w-[42px]" viewBox="0 0 42 26" fill="currentColor" aria-label="5G signal">
          <path d="M1 5h6L4 1ZM16 16h4v9h-4ZM23 13h4v12h-4ZM30 8h4v17h-4ZM38 1h4v24h-4Z" />
          <path d="M1 7h6L4 11Z" opacity=".3" />
          <text x="9" y="10.500" fontFamily="Roboto" fontWeight="700" fontSize="13">5G</text>
          <path d="M26 3h5M28.500.5v5M32 3h5M34.500.5v5" stroke="currentColor" strokeWidth="1.500" />
        </svg>
        <svg className="ml-3 h-[27px] w-[17px]" viewBox="0 0 17 27" aria-label="Battery">
          <path d="M5 2q0-2 2-2h3q2 0 2 2h3q2 1 2 4H0q0-3 2-4Z" fill="#5a5d60" />
          <path d="M0 6h17v17q0 4-4 4H4q-4 0-4-4Z" fill="currentColor" />
        </svg>
        <span className="ml-1 font-[Inter] text-[24px] leading-8">66%</span>
      </div>
    </div>
  );
}

function Header() {
  return (
    <header className="flex h-[104px] items-center border-b border-[#14191d] pb-1.5 pl-8 pr-10 text-[#f7f8f8]">
      <button aria-label="Back" className="h-[34px] w-[34px]">
        <svg viewBox="0 0 34 34" fill="none" stroke="currentColor" strokeWidth="4">
          <path d="M19 2 4 17l15 15M3 17h30" />
        </svg>
      </button>
      <div className="ml-10 flex size-[73px] shrink-0 items-center justify-center rounded-full bg-[#351a2c] text-[34px] font-light text-[#f2719f]">
        RO
      </div>
      <h1 className="ml-6 min-w-0 flex-1 truncate text-[34px] font-light leading-[44px]">Rahul Hitex Hy...</h1>
      <button aria-label="Video call" className="ml-8 h-[34px] w-[42px] shrink-0">
        <svg viewBox="0 0 42 34" fill="none" stroke="currentColor" strokeWidth="4">
          <rect x="2.500" y="2" width="29.500" height="30" rx="2" />
          <path d="M32 17 41 7v20Z" fill="currentColor" stroke="none" />
        </svg>
      </button>
      <button aria-label="Call" className="ml-[58px] h-[37px] w-[37px] shrink-0">
        <svg viewBox="0 0 37 37" fill="none" stroke="currentColor" strokeWidth="3.600" strokeLinejoin="round">
          <path d="M2 2h9l2 9-5 5c3 6 7 10 13 13l5-5 9 2v9C17 35 2 20 2 2Z" />
        </svg>
      </button>
      <button aria-label="More options" className="ml-[62px] h-[34px] w-[9px] shrink-0">
        <svg viewBox="0 0 9 34" fill="currentColor">
          <circle cx="4.500" cy="5" r="4.400" />
          <circle cx="4.500" cy="17" r="4.400" />
          <circle cx="4.500" cy="29" r="4.400" />
        </svg>
      </button>
    </header>
  );
}

function Time({ children, ticks }: { children: ReactNode; ticks?: "read" | "sent" }) {
  return (
    <span className="flex shrink-0 items-baseline gap-2 text-[25px] font-light leading-8">
      {children}
      {ticks && (
        <svg
          className={ticks === "read" ? "h-[23px] w-8 text-[#53bdeb]" : "h-[23px] w-8 text-[#a0bbaf]"}
          viewBox="0 0 96 69"
          fill="none"
          stroke="currentColor"
          strokeWidth="9"
          aria-label={ticks}
        >
          <path d="M3 43l18 19L64 5M42 50l10 12L94 5" />
        </svg>
      )}
    </span>
  );
}

function Bubble({ incoming, tail, className, children }: { incoming?: boolean; tail?: boolean; className: string; children: ReactNode }) {
  const tone = incoming ? "self-start bg-[#1f272a] text-[#f0f2f2]" : "self-end bg-[#144d37] text-[#eefaf3]";
  const corner = tail ? (incoming ? "rounded-tl-none" : "rounded-tr-none") : "";
  return (
    <div className={`relative max-w-full rounded-3xl ${tone} ${corner} ${className}`}>
      {tail && (
        <svg
          aria-hidden="true"
          className={incoming ? "absolute -left-3.5 top-0 h-5 w-[15px] -scale-x-100 text-[#1f272a]" : "absolute -right-3.5 top-0 h-5 w-[15px] text-[#144d37]"}
          viewBox="0 0 15 20"
          fill="currentColor"
        >
          <path d="M0 0h13q3 1 1 4L1 20H0Z" />
        </svg>
      )}
      {children}
    </div>
  );
}

function Chat() {
  return (
    <main className="flex flex-col items-center px-[35px] pt-[21px]">
      <div className="rounded-2xl bg-[#12181c] px-[18px] pb-1.5 pt-2.5 text-[26px] font-light leading-[37px] text-[#8d9498]">Today</div>
      <p className="mt-[23px] max-w-[573px] rounded-2xl bg-[#12181c] px-6 pb-2.5 pt-4 text-center text-[27px] font-light leading-[31px] text-[#e9cb85]">
        <svg className="mr-2.5 inline h-[18px] w-3.5 align-baseline" viewBox="0 0 14 18" aria-label="Locked">
          <path d="M3.500 8V5a3.500 3.500 0 0 1 7 0v3" fill="none" stroke="#fbd27b" strokeWidth="2" />
          <rect y="6.500" width="14" height="11.500" rx="1.500" fill="#fbd27b" />
          <circle cx="7" cy="12" r="1.800" fill="#12181c" />
        </svg>
        Messages and calls are end-to-end encrypted. Only people in this chat can read, listen to, or share them.{" "}
        <a href="#learn" className="inline-block font-semibold text-[#fbd27b]">Learn more</a>
      </p>

      <Bubble tail className="mt-[22px] flex items-end gap-[18px] pb-1.5 pl-[21px] pr-[18px] pt-3.5">
        <p className="pb-2.5 text-[33px] font-light leading-9">Hi rahul</p>
        <div className="text-[#8fb0a2]"><Time ticks="read">7:49 pm</Time></div>
      </Bubble>
      <Bubble className="mt-1.5 flex flex-col pb-1.5 pl-[21px] pr-[18px] pt-3.5">
        <p className="pr-2 text-[33px] font-light leading-[39px]">
          Can we work
          <br />
          Overnight and complete stall setup
        </p>
        <div className="mt-2.5 self-end text-[#8fb0a2]"><Time ticks="read">7:50 pm</Time></div>
      </Bubble>

      <Bubble tail className="mt-[21px] p-2">
        <div className="flex items-center rounded-2xl bg-[#144232] py-5 pl-[17px] pr-4">
          <div className="flex size-[81px] shrink-0 items-center justify-center rounded-full bg-[#2c5747] text-[#9cada8]">
            <svg className="h-8 w-8" viewBox="0 0 32 32" fill="currentColor" aria-label="Outgoing call">
              <path d="M0 2h8l2 8-4 5q3 7 10 11l5-4 9 2v8C13 32 0 19 0 2Z" />
              <path d="M17 14 27 4M19 3h10v10" fill="none" stroke="currentColor" strokeWidth="3.500" />
            </svg>
          </div>
          <div className="ml-4 pb-1.5">
            <p className="text-[29px] font-semibold leading-[37px] text-white">Voice call</p>
            <p className="text-[29px] font-light leading-[37px] text-[#8fb0a2]">No answer</p>
          </div>
          <div className="-mb-1.5 ml-6 self-end text-[#8fb0a2]"><Time>8:01 pm</Time></div>
        </div>
      </Bubble>

      <Bubble incoming tail className="mt-[21px] flex items-end gap-[29px] pb-1 pl-5 pr-4 pt-3.5">
        <p className="pb-3 text-[33px] font-light leading-9">Yes</p>
        <div className="text-[#8d9498]"><Time>8:02 pm</Time></div>
      </Bubble>

      <Bubble tail className="mt-[21px] flex flex-col pb-1.5 pl-[21px] pr-[18px] pt-3.5">
        <p className="pr-2 text-[33px] font-light leading-[39px]">It will be open whole night right?</p>
        <div className="mt-2.5 self-end text-[#8fb0a2]"><Time ticks="sent">8:03 pm</Time></div>
      </Bubble>
    </main>
  );
}

function Composer() {
  return (
    <form className="mt-auto flex items-end gap-[17px] pb-2.5 pl-[18px] pr-[19px]">
      <div className="flex h-[95px] min-w-0 flex-1 items-center rounded-full bg-[#1f272a] pl-[26px] pr-[27px] text-[#8b9296]">
        <button type="button" aria-label="Stickers" className="h-[41px] w-[41px] shrink-0">
          <svg viewBox="0 0 41 41" fill="none" stroke="currentColor" strokeWidth="4" strokeLinejoin="round">
            <path d="M13 2h15q11 0 11 11v11L24 39H13Q2 39 2 28V13Q2 2 13 2Z" />
            <path d="M39 22H33q-9 0-9 9v8" strokeWidth="3" />
            <path d="M11 24h17q-6 3-6 9-9-1-11-9Z" fill="currentColor" stroke="none" />
            <circle cx="13.500" cy="14" r="3" fill="currentColor" stroke="none" />
            <circle cx="27.500" cy="14" r="3" fill="currentColor" stroke="none" />
          </svg>
        </button>
        <label className="ml-7 flex min-w-0 flex-1 items-center">
          <span className="h-[49px] w-1 shrink-0 bg-[#2fb868]" />
          <input
            type="text"
            aria-label="Message"
            placeholder="Message"
            className="-ml-0.5 w-full min-w-0 bg-transparent pt-1 text-[37px] font-light leading-[49px] outline-none placeholder:text-[#8b9296]"
          />
        </label>
        <button type="button" aria-label="Attach" className="h-[41px] w-[27px] shrink-0">
          <svg viewBox="0 0 27 41" fill="none" stroke="currentColor" strokeWidth="4">
            <path d="M25 8v20c0 14-23 14-23 0V10c0-11 16-11 16 0v16c0 6-9 6-9 0V10" />
          </svg>
        </button>
        <button type="button" aria-label="Payment" className="ml-[64px] h-[41px] w-[41px] shrink-0">
          <svg viewBox="0 0 41 41" fill="none" stroke="currentColor" strokeWidth="3.400">
            <circle cx="20.500" cy="20.500" r="18.500" />
            <path d="M14 13h14M14 18h14M14 13h5c7 0 7 9 0 9h-4l8 8" strokeWidth="2.600" />
          </svg>
        </button>
        <button type="button" aria-label="Camera" className="ml-14 h-[37px] w-[41px] shrink-0">
          <svg viewBox="0 0 41 37" fill="none" stroke="currentColor" strokeWidth="3.800" strokeLinejoin="round">
            <path d="M2 6h10l3-4h11l3 4h10v29H2Z" />
            <circle cx="20.500" cy="20" r="7.500" />
          </svg>
        </button>
      </div>
      <button type="button" aria-label="Record voice message" className="flex size-[98px] shrink-0 items-center justify-center rounded-full bg-[#21c063] text-[#0b1014]">
        <svg className="h-10 w-7" viewBox="0 0 28 40" fill="none" stroke="currentColor" strokeWidth="3.600">
          <rect x="8" y="1" width="12.500" height="25" rx="6.200" fill="currentColor" stroke="none" />
          <path d="M2 19c1 16 23 16 24 0M14 31v9" />
        </svg>
      </button>
    </form>
  );
}

function NavBar() {
  return (
    <nav className="grid h-[89px] grid-cols-3 items-center justify-items-center bg-black pl-[111px] pr-[121px] text-[#6c6f71]">
      <button aria-label="Recent apps" className="h-[25px] w-[25px]">
        <svg viewBox="0 0 25 25" stroke="currentColor" strokeWidth="2">
          <path d="M0 1h25M0 12.500h25M0 24h25" />
        </svg>
      </button>
      <button aria-label="Home" className="h-[25px] w-[25px]">
        <svg viewBox="0 0 25 25" fill="none" stroke="currentColor" strokeWidth="1.600">
          <rect x="1" y="1" width="23" height="23" rx="5" />
        </svg>
      </button>
      <button aria-label="Go back" className="h-[25px] w-[25px]">
        <svg viewBox="0 0 25 25" fill="none" stroke="currentColor" strokeWidth="1.600" strokeLinejoin="round">
          <path d="M21 1.500 2 11q-2 1.500 0 3l19 9.500q2.500 0 2.500-2.500V4q0-2.500-2.500-2.500Z" />
        </svg>
      </button>
    </nav>
  );
}

export default function App() {
  return (
    <div className="flex min-h-screen flex-col bg-[#0b1014] font-[Roboto,sans-serif]">
      <StatusBar />
      <Header />
      <div className="relative flex flex-1 flex-col overflow-hidden bg-[#0a0f13]">
        <Wallpaper />
        <div className="relative flex flex-1 flex-col">
          <Chat />
          <Composer />
        </div>
      </div>
      <NavBar />
    </div>
  );
}
